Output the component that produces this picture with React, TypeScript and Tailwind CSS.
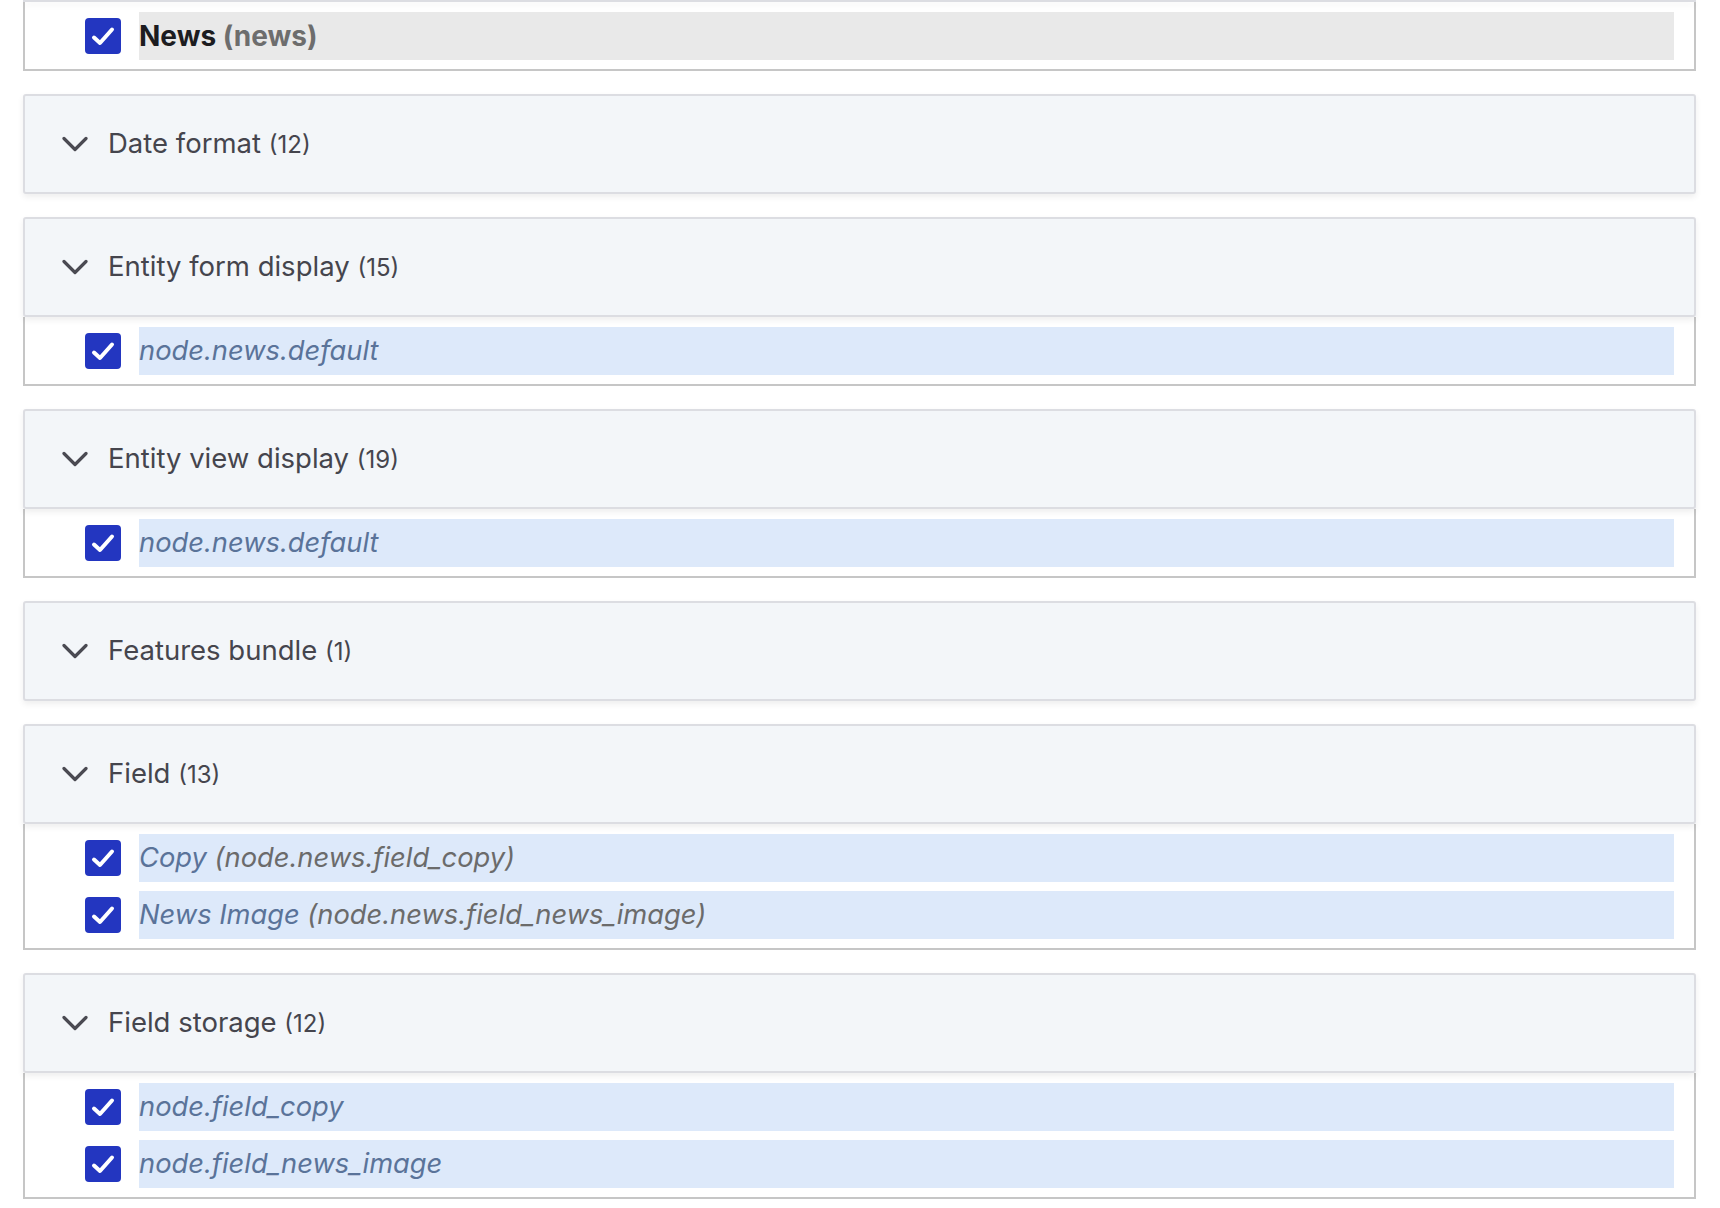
import type { ReactNode } from "react";

type Item = { label: ReactNode; tone?: "gray" | "blue" };
type Section = { title?: string; count?: number; items: Item[] };

const sections: Section[] = [
  {
    // header of this one is scrolled off the top of the page
    items: [
      {
        tone: "gray",
        label: (
          <span className="text-[28px] font-bold text-[#1c1c20]">
            News <span className="text-[#6d6d6d]">(news)</span>
          </span>
        ),
      },
    ],
  },
  { title: "Date format", count: 12, items: [] },
  {
    title: "Entity form display",
    count: 15,
    items: [{ label: <span className="italic text-[#5a7399]">node.news.default</span> }],
  },
  {
    title: "Entity view display",
    count: 19,
    items: [{ label: <span className="italic text-[#5a7399]">node.news.default</span> }],
  },
  { title: "Features bundle", count: 1, items: [] },
  {
    title: "Field",
    count: 13,
    items: [
      {
        label: (
          <span className="italic text-[#5a7399]">
            Copy <span className="text-[#6b6b6b]">(node.news.field_copy)</span>
          </span>
        ),
      },
      {
        label: (
          <span className="italic text-[#5a7399]">
            News Image <span className="text-[#6b6b6b]">(node.news.field_news_image)</span>
          </span>
        ),
      },
    ],
  },
  {
    title: "Field storage",
    count: 12,
    items: [
      { label: <span className="italic text-[#5a7399]">node.field_copy</span> },
      { label: <span className="italic text-[#5a7399]">node.field_news_image</span> },
    ],
  },
];

function Chevron() {
  return (
    <svg width="26" height="16" viewBox="0 0 26 16" fill="none" className="shrink-0">
      <path d="M2 2.5 L13 13.5 L24 2.5" stroke="#4a4a52" strokeWidth="3.2" strokeLinecap="round" strokeLinejoin="round" />
    </svg>
  );
}

function Checked() {
  return (
    <span className="flex h-9 w-9 shrink-0 items-center justify-center rounded-[4px] bg-[#2336c0]">
      <svg width="36" height="36" viewBox="0 0 36 36" fill="none">
        <path d="M9 19.5 L15 25 L27 11.5" stroke="white" strokeWidth="4" strokeLinecap="round" strokeLinejoin="round" />
      </svg>
    </span>
  );
}

function Details({ s }: { s: Section }) {
  return (
    <div className="mb-[23px]">
      {s.title ? (
        <div className="relative z-10 flex h-[100px] items-center gap-5 rounded-[3px] border-2 border-[#dcdde2] bg-[#f3f6f9] pl-[37px] shadow-[0_3px_6px_rgba(0,0,0,0.07)]">
          <Chevron />
          <span className="text-[27.5px] text-[#45454d]">
            {s.title} <span className="text-[24px]">({s.count})</span>
          </span>
        </div>
      ) : (
        <div className="relative z-10 h-[2px] border-b-2 border-[#dcdde2] bg-[#f3f6f9] shadow-[0_3px_6px_rgba(0,0,0,0.07)]" />
      )}
      {s.items.length > 0 && (
        <div className="flex flex-col gap-[9px] border-2 border-t-0 border-[#c6c6c6] bg-white pb-[9px] pl-[60px] pr-5 pt-[10px]">
          {s.items.map((it, i) => (
            <div key={i} className="flex items-center gap-[18px]">
              <Checked />
              <div
                className={
                  "flex h-12 flex-1 items-center text-[27.3px] " +
                  (it.tone === "gray" ? "bg-[#e9e9e9]" : "bg-[#dde9fa]")
                }
              >
                {it.label}
              </div>
            </div>
          ))}
        </div>
      )}
    </div>
  );
}

export default function App() {
  return (
    <div className="h-[1208px] w-full overflow-hidden bg-white" style={{ fontFamily: "Inter, 'Noto Sans', sans-serif" }}>
      <div className="pl-[23px] pr-[24px]">
        {sections.map((s, i) => (
          <Details key={i} s={s} />
        ))}
      </div>
    </div>
  );
}
